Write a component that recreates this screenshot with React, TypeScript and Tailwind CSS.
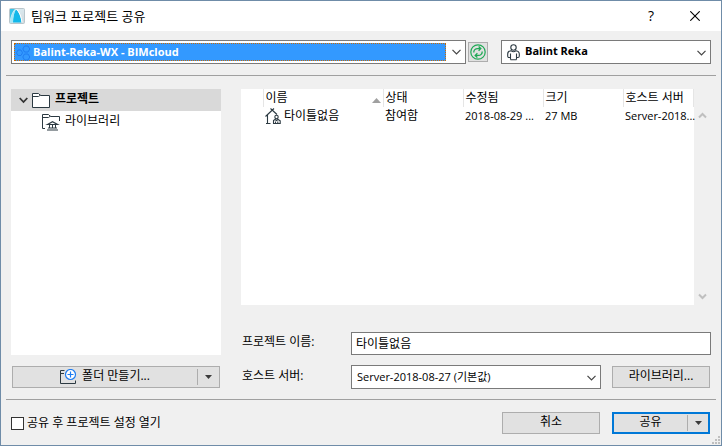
import React, { useState } from 'react';

const columns = [
  { label: '', width: 'w-[22px]' },
  { label: '이름', width: 'w-[120px]', sorted: true },
  { label: '상태', width: 'w-[80px]' },
  { label: '수정됨', width: 'w-[80px]' },
  { label: '크기', width: 'w-[80px]' },
  { label: '호스트 서버', width: '' },
];

const buttonClass = 'h-[22px] border border-[#adadad] bg-[#e1e1e1] hover:border-[#0078d7]';

function AppLogo() {
  return (
    <svg width="16" height="16" viewBox="0 0 16 16" aria-hidden="true">
      <defs>
        <linearGradient id="tile" x1="0" y1="0" x2="1" y2="1">
          <stop offset="0" stopColor="#dff5fc" />
          <stop offset="1" stopColor="#d2d8dc" />
        </linearGradient>
      </defs>
      <rect x="0.5" y="0.5" width="15" height="15" rx="1" fill="url(#tile)" stroke="#b9c6cc" />
      <path d="M1 1H6C3.500 3.500 2 7 1 12z" fill="#35c4ea" />
      <path d="M4 14.500C4 9 5 4 7 1.500C10 4 12 9 12.500 14.500z" fill="#12b8ea" />
      <path d="M1 15C1.500 9 3.500 4 6.500 1.500C5 5 4 10 4 14.500z" fill="#a5e8f8" />
      <path d="M7.500 1C10.500 4 12.500 9 13 14.500" fill="none" stroke="#fff" strokeWidth="1" />
    </svg>
  );
}

function ChevronDown() {
  return (
    <svg width="9" height="6" viewBox="0 0 9 6" fill="none" stroke="#444" strokeWidth="1.200" aria-hidden="true">
      <path d="M0.500 0.800L4.500 4.800L8.500 0.800" />
    </svg>
  );
}

function ScrollArrow({ up }: { up?: boolean }) {
  return (
    <svg width="9" height="7" viewBox="0 0 9 7" fill="none" stroke="#bfbfbf" strokeWidth="2" aria-hidden="true">
      <path d={up ? 'M1 5.500L4.500 2L8 5.500' : 'M1 1.500L4.500 5L8 1.500'} />
    </svg>
  );
}

function CloudIcon() {
  return (
    <svg width="15" height="16" viewBox="0 0 15 16" fill="none" stroke="#1f7df2" strokeWidth="1" aria-hidden="true">
      <path d="M2 5H5L6.500 7.800L5 10.500H2L0.500 7.800z" />
      <path d="M8.500 1H12L13.800 4L12 7H8.500L6.800 4z" />
      <path d="M8.500 9H12L13.800 12L12 15H8.500L6.800 12z" />
    </svg>
  );
}

function RefreshIcon() {
  return (
    <svg width="16" height="16" viewBox="0 0 16 16" fill="none" stroke="#1fa955" aria-hidden="true">
      <circle cx="8" cy="8" r="7.200" strokeWidth="1.200" />
      <path strokeWidth="1.300" d="M3.800 8.500C3.600 6 5.500 4.600 7.500 4.600H10.500M8.600 2.500L10.800 4.600L8.600 6.700M12.200 7.500C12.400 10 10.500 11.400 8.500 11.400H5.500M7.400 9.300L5.200 11.400L7.400 13.500" />
    </svg>
  );
}

function UserIcon() {
  return (
    <svg width="13" height="17" viewBox="0 0 13 17" fill="none" stroke="#2c3a42" strokeWidth="1.100" aria-hidden="true">
      <circle cx="6.500" cy="3.500" r="2.700" />
      <path d="M3.500 15.500V9.500M9.500 15.500V9.500M3.500 13.500H2C1.200 13.500 0.700 13 0.700 12V10C0.700 8 2 7 4 6.700C5.500 8 7.500 8 9 6.700C11 7 12.300 8 12.300 10V12C12.300 13 11.800 13.500 11 13.500H9.500M3.500 15.700H9.500" />
    </svg>
  );
}

function FolderIcon() {
  return (
    <svg width="18" height="15" viewBox="0 0 18 15" fill="none" aria-hidden="true">
      <path fill="#fff" stroke="#2c3a42" d="M0.500 14.500V0.500H6.500L8.500 2.500H17.500V14.500z" />
      <path stroke="#2c3a42" d="M0.500 3.500H6.500L8.500 2" />
    </svg>
  );
}

function LibraryFolderIcon() {
  return (
    <svg width="18" height="17" viewBox="0 0 18 17" fill="none" stroke="#2c3a42" aria-hidden="true">
      <path d="M3 14.500H0.500V0.500H6.500L8.500 2.500H17.500V7M0.500 3.500H6.500L8.500 2" />
      <path strokeWidth="1.200" d="M5 16H16M6 14H15M5.500 10.500L10.500 7.700L15.500 10.500z" />
      <path d="M7.500 10.500V14M10.500 10.500V14M13.500 10.500V14" />
    </svg>
  );
}

function NewFolderIcon() {
  return (
    <svg width="17" height="16" viewBox="0 0 17 16" fill="none" aria-hidden="true">
      <path stroke="#2c3a42" d="M4.500 1.500H0.500V14.500H15.500V11.500M0.500 4.500H4" />
      <circle cx="10.500" cy="5.500" r="5" fill="#fff" stroke="#1f7df2" strokeWidth="1.200" />
      <path stroke="#1f7df2" strokeWidth="1.200" d="M10.500 2.500V8.500M7.500 5.500H13.500" />
    </svg>
  );
}

function ProjectIcon() {
  return (
    <svg width="16" height="17" viewBox="0 0 16 17" fill="none" stroke="#2c3a42" strokeWidth="1.100" aria-hidden="true">
      <path d="M0.500 8.500L9 0.500M5.500 0.500L12 6.500M2.500 7V15.500M1 15.500H5.500" />
      <circle cx="11.500" cy="9" r="1.700" />
      <path d="M8.500 15.500V12.500L10 11.500L11.500 12.500L13 11.500L15.200 12.800V15.500z" />
      <path d="M10.500 13.500V15.500M12.800 13.500V15.500" />
    </svg>
  );
}

function DropArrow() {
  return (
    <svg width="7" height="4" viewBox="0 0 7 4" fill="#3c3c3c" aria-hidden="true">
      <path d="M0 0H7L3.500 4z" />
    </svg>
  );
}

export default function App() {
  const [name, setName] = useState('타이틀없음');
  const [openSettings, setOpenSettings] = useState(false);

  return (
    <div className="flex min-h-screen flex-col border border-[#6f8ca8] bg-[#f0f0f0] font-['Open_Sans','Noto_Sans_CJK_KR',sans-serif] text-xs text-black">
      {/* Title bar */}
      <header className="flex h-[30px] items-center bg-white pl-2 pr-4">
        <AppLogo />
        <h1 className="ml-[6px] flex-1 text-[13px] leading-4">팀워크 프로젝트 공유</h1>
        <button className="mr-6 w-5 text-sm font-medium leading-4" aria-label="도움말">?</button>
        <button className="flex w-5 justify-center" aria-label="닫기">
          <svg width="10" height="10" viewBox="0 0 10 10" stroke="#000" strokeWidth="1.100">
            <path d="M0.300 0.300L9.700 9.700M9.700 0.300L0.300 9.700" />
          </svg>
        </button>
      </header>

      {/* Server and user */}
      <div className="mx-[5px] flex items-center border-b border-[#a0a0a0] px-[5px] pb-[11px] pt-[9px]">
        <div className="relative flex h-6 min-w-0 flex-1 items-center border border-[#7a7a7a] bg-white pl-[2px] pr-1">
          <span className="pointer-events-none absolute left-1 top-[4px]">
            <CloudIcon />
          </span>
          <select
            aria-label="서버"
            className="h-[18px] min-w-0 flex-1 appearance-none border border-dotted border-[#cc6a00] bg-[#3399ff] pl-[18px] text-[11px] font-bold leading-4 text-white outline-none"
          >
            <option>Balint-Reka-WX - BIMcloud</option>
          </select>
          <span className="pointer-events-none ml-[6px]">
            <ChevronDown />
          </span>
        </div>
        <button className="ml-[2px] flex size-5 items-center justify-center border border-[#adadad] bg-[#e1e1e1]" aria-label="새로 고침">
          <RefreshIcon />
        </button>
        <div className="relative ml-[13px] h-6 w-[210px] border border-[#7a7a7a] bg-white">
          <span className="pointer-events-none absolute left-[5px] top-[3px]">
            <UserIcon />
          </span>
          <select aria-label="사용자" className="block h-5 w-full appearance-none pl-[23px] text-[11px] font-bold leading-4 outline-none">
            <option>Balint Reka</option>
          </select>
          <span className="pointer-events-none absolute right-1 top-[9px]">
            <ChevronDown />
          </span>
        </div>
      </div>

      <main className="flex flex-1 gap-5 px-[10px] pb-[10px] pt-[13px]">
        {/* Folder tree */}
        <section className="flex w-[210px] flex-col pb-px">
          <ul className="flex-1 bg-white">
            <li className="flex h-[22px] items-center bg-[#d9d9d9] pl-2">
              <svg width="9" height="7" viewBox="0 0 9 7" fill="none" stroke="#333" strokeWidth="1.800" aria-hidden="true">
                <path d="M0.700 1L4.500 5L8.300 1" />
              </svg>
              <span className="ml-1">
                <FolderIcon />
              </span>
              <span className="pb-[3px] pl-[5px] font-bold leading-4">프로젝트</span>
            </li>
            <li className="flex h-[22px] items-center pl-[31px]">
              <LibraryFolderIcon />
              <span className="pb-[3px] pl-[5px] leading-4">라이브러리</span>
            </li>
          </ul>
          <div className={`${buttonClass} mx-px mt-[11px] flex items-center`}>
            <button className="flex flex-1 items-center justify-center gap-[5px]">
              <NewFolderIcon />
              <span className="pb-[3px] leading-4">폴더 만들기...</span>
            </button>
            <button className="flex h-4 w-[22px] items-center justify-center border-l border-[#adadad]" aria-label="폴더 옵션">
              <DropArrow />
            </button>
          </div>
        </section>

        {/* Project list and form */}
        <section className="flex min-w-0 flex-1 flex-col">
          <div className="flex flex-1">
            <div className="min-w-0 flex-1 bg-white">
              <table className="w-full table-fixed border-collapse text-left">
                <thead>
                  <tr className="h-[18px]">
                    {columns.map((col, i) => (
                      <th key={i} className={`${col.width} border-r border-[#e5e5e5] p-0 pl-[2px] font-normal leading-4`}>
                        <div className="flex items-center justify-between whitespace-nowrap">
                          {col.label}
                          {col.sorted && (
                            <svg className="mr-[2px] mt-[5px]" width="9" height="5" viewBox="0 0 9 5" fill="#a0a0a0" aria-hidden="true">
                              <path d="M4.500 0L9 5H0z" />
                            </svg>
                          )}
                        </div>
                      </th>
                    ))}
                  </tr>
                </thead>
                <tbody>
                  <tr className="h-[18px] whitespace-nowrap leading-4">
                    <td className="p-0"></td>
                    <td className="p-0 pl-[2px]">
                      <div className="flex items-center gap-[3px]">
                        <ProjectIcon />
                        타이틀없음
                      </div>
                    </td>
                    <td className="p-0 pl-[2px]">참여함</td>
                    <td className="p-0 pl-[2px] text-[11px]">2018-08-29 ...</td>
                    <td className="p-0 pl-[2px] text-[11px]">27 MB</td>
                    <td className="p-0 pl-[2px] text-[11px]">Server-2018...</td>
                  </tr>
                </tbody>
              </table>
            </div>
            <div className="flex w-[17px] flex-col items-center justify-between pb-[5px] pt-[23px]">
              <ScrollArrow up />
              <ScrollArrow />
            </div>
          </div>

          <div className="mt-[27px] flex items-center">
            <label htmlFor="name" className="w-[110px] pb-[3px] pl-px leading-4">프로젝트 이름:</label>
            <input
              id="name"
              value={name}
              onChange={(e) => setName(e.target.value)}
              className="h-[23px] min-w-0 flex-1 border border-[#7a7a7a] bg-white px-1 pb-[2px] text-xs leading-4 outline-none"
            />
          </div>
          <div className="mt-[10px] flex items-center">
            <label htmlFor="host" className="w-[110px] pb-[3px] pl-px leading-4">호스트 서버:</label>
            <div className="relative h-6 min-w-0 flex-1 border border-[#7a7a7a] bg-white">
              <select id="host" className="block h-[21px] w-full appearance-none pl-[5px] text-[11px] leading-4 outline-none">
                <option>Server-2018-08-27 (기본값)</option>
              </select>
              <span className="pointer-events-none absolute right-1 top-[9px]">
                <ChevronDown />
              </span>
            </div>
            <button className={`${buttonClass} ml-[11px] mr-px w-[98px] pb-[3px] leading-4`}>라이브러리...</button>
          </div>
        </section>
      </main>

      {/* Footer */}
      <footer className="relative mx-[5px] flex items-center border-t border-[#a0a0a0] pb-[11px] pl-[5px] pr-[6px] pt-3">
        <label className="flex flex-1 items-center gap-[3px] leading-4">
          <input
            type="checkbox"
            checked={openSettings}
            onChange={(e) => setOpenSettings(e.target.checked)}
            className="size-[13px] appearance-none border border-[#333] bg-white checked:bg-[#0078d7]"
          />
          공유 후 프로젝트 설정 열기
        </label>
        <button className={`${buttonClass} w-[98px] pb-[3px] leading-4`}>취소</button>
        <div className="ml-3 flex h-[22px] w-[98px] items-center border-2 border-[#0078d7] bg-[#e1e1e1]">
          <button className="flex-1 pb-[3px] leading-4">공유</button>
          <button className="flex h-4 w-[21px] items-center justify-center border-l border-[#adadad]" aria-label="공유 옵션">
            <DropArrow />
          </button>
        </div>
        <svg className="absolute -right-1 bottom-px" width="8" height="8" viewBox="0 0 8 8" fill="#bfbfbf" aria-hidden="true">
          <path d="M6 0h2v2h-2zM3 3h2v2h-2zM6 3h2v2h-2zM0 6h2v2h-2zM3 6h2v2h-2zM6 6h2v2h-2z" />
        </svg>
      </footer>
    </div>
  );
}
